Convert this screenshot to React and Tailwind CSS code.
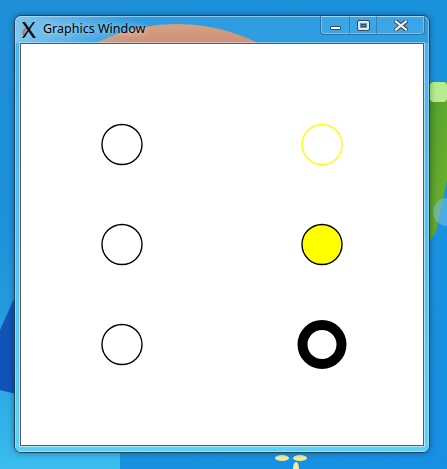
import React from "react";

function Wallpaper() {
  return (
    <svg className="absolute inset-0" width="447" height="469" viewBox="0 0 447 469">
      <defs>
        <linearGradient id="bg" x1="0" y1="0" x2="1" y2="1">
          <stop offset="0" stopColor="#1f8fd8" />
          <stop offset="0.5" stopColor="#1a92dc" />
          <stop offset="1" stopColor="#1790e4" />
        </linearGradient>
        <linearGradient id="bgl" x1="0" y1="0" x2="0" y2="1">
          <stop offset="0" stopColor="#2a9ddf" stopOpacity="0" />
          <stop offset="1" stopColor="#3fc3f0" stopOpacity="0.9" />
        </linearGradient>
        <linearGradient id="red" x1="0" y1="0" x2="0" y2="1">
          <stop offset="0" stopColor="#f49860" />
          <stop offset="0.1" stopColor="#ec6a44" />
          <stop offset="0.3" stopColor="#e0503a" />
        </linearGradient>
        <linearGradient id="green" x1="0" y1="0" x2="1" y2="1">
          <stop offset="0" stopColor="#4e9a2a" />
          <stop offset="1" stopColor="#6fb530" />
        </linearGradient>
        <clipPath id="top">
          <rect x="0" y="0" width="447" height="46" />
        </clipPath>
      </defs>
      <rect width="447" height="469" fill="url(#bg)" />
      <rect x="0" y="200" width="120" height="269" fill="url(#bgl)" />
      <g clipPath="url(#top)">
        <circle cx="177" cy="206" r="182" fill="url(#red)" />
      </g>
      <polygon points="430,82 447,82 447,180 436,232 430,240" fill="url(#green)" />
      <rect x="430" y="82" width="17" height="20" rx="4" fill="#b8ec90" />
      <circle cx="447" cy="212" r="14" fill="#7fc4f0" opacity="0.5" />
      <polygon points="0,330 18,290 20,395 0,390" fill="#1054b8" />
      <ellipse cx="282" cy="458" rx="7" ry="3" fill="#f3eca0" />
      <ellipse cx="300" cy="458" rx="7" ry="3" fill="#f3eca0" />
      <ellipse cx="296" cy="469" rx="3" ry="7" fill="#f3eca0" />
    </svg>
  );
}

function XLogo() {
  return (
    <svg width="16" height="18" viewBox="0 0 16 18">
      <path d="M5 15.5 C1.5 13.5 2 9 5.5 7.5" stroke="#e0602a" strokeWidth="1.8" fill="none" />
      <polygon points="1,1 4,1 15,17 12,17" fill="#111" />
      <polygon points="12,1 14,1 3,17 1,17" fill="#111" />
    </svg>
  );
}

function Canvas() {
  return (
    <svg width="402" height="400" viewBox="0 0 402 400" className="block">
      <circle cx="101" cy="100.5" r="20" fill="none" stroke="#000" strokeWidth="1.4" />
      <circle cx="101" cy="200.5" r="20" fill="none" stroke="#000" strokeWidth="1.4" />
      <circle cx="101" cy="300.5" r="20" fill="none" stroke="#000" strokeWidth="1.4" />
      <circle cx="301" cy="100.5" r="20" fill="none" stroke="#ffff00" strokeWidth="1.4" />
      <circle cx="301" cy="200.5" r="20" fill="#ffff00" stroke="#000" strokeWidth="1.4" />
      <circle cx="301" cy="300.5" r="19.5" fill="none" stroke="#000" strokeWidth="10" />
    </svg>
  );
}

export default function App() {
  return (
    <div
      className="relative w-[447px] h-[469px] overflow-hidden"
      style={{ fontFamily: '"Noto Sans", "DejaVu Sans", sans-serif' }}
    >
      <Wallpaper />
      <div className="absolute left-[14px] top-[15px] w-[416px] h-[438px] rounded-[7px] border border-[#21425c] shadow-[0_0_6px_rgba(0,0,0,0.35)] flex flex-col overflow-hidden">
        <div className="relative h-[27px] flex items-center pl-[6px] gap-[6px] bg-[#6cc0f2]/25 rounded-t-[6px] shadow-[inset_0_1px_0_rgba(255,255,255,0.45),inset_1px_0_0_rgba(255,255,255,0.35),inset_-1px_0_0_rgba(255,255,255,0.35)]">
          <div className="absolute inset-0 bg-gradient-to-r from-[#c0e8fb]/55 via-[#c0e8fb]/0 via-[28%] to-transparent pointer-events-none" />
          <div className="relative">
            <XLogo />
          </div>
          <span className="relative text-[12.5px] text-black leading-none [text-shadow:0_0_6px_rgba(255,255,255,0.9)]">
            Graphics Window
          </span>
          <div className="absolute right-[4px] top-0 h-[19px] flex rounded-b-[4px] border border-t-0 border-[#2b5f86]/70 shadow-[inset_0_0_0_1px_rgba(255,255,255,0.3)] overflow-hidden bg-[#5ab8ee]/30">
            <div className="w-[29px] flex items-center justify-center border-r border-[#2b5f86]/50">
              <div className="mt-[6px] w-[11px] h-[4px] bg-white border border-[#39495a] rounded-[1px]" />
            </div>
            <div className="w-[27px] flex items-center justify-center border-r border-[#2b5f86]/50">
              <div className="w-[11px] h-[9px] border-[2px] border-[#dfe9f2] outline outline-1 outline-[#39495a] rounded-[1px] flex items-center justify-center">
                <div className="w-[5px] h-[3px] border border-[#39495a]" />
              </div>
            </div>
            <div className="w-[47px] flex items-center justify-center">
              <svg width="14" height="11" viewBox="0 0 14 11">
                <path d="M2 1.5 L12 9.5 M12 1.5 L2 9.5" stroke="#39495a" strokeWidth="4.2" strokeLinecap="square" />
                <path d="M2 1.5 L12 9.5 M12 1.5 L2 9.5" stroke="#f0f0f0" strokeWidth="2.2" strokeLinecap="square" />
              </svg>
            </div>
          </div>
        </div>
        <div className="flex-1 flex flex-col px-[5px] pb-[6px] bg-gradient-to-b from-[#4eb2ec] to-[#5fd0f6] shadow-[inset_1px_0_0_rgba(255,255,255,0.35),inset_-1px_0_0_rgba(255,255,255,0.35),inset_0_-1px_0_rgba(255,255,255,0.4)]">
          <div className="flex-1 border border-[#505c66] bg-white shadow-[0_0_0_1px_rgba(255,255,255,0.5)]">
            <Canvas />
          </div>
        </div>
      </div>
    </div>
  );
}
